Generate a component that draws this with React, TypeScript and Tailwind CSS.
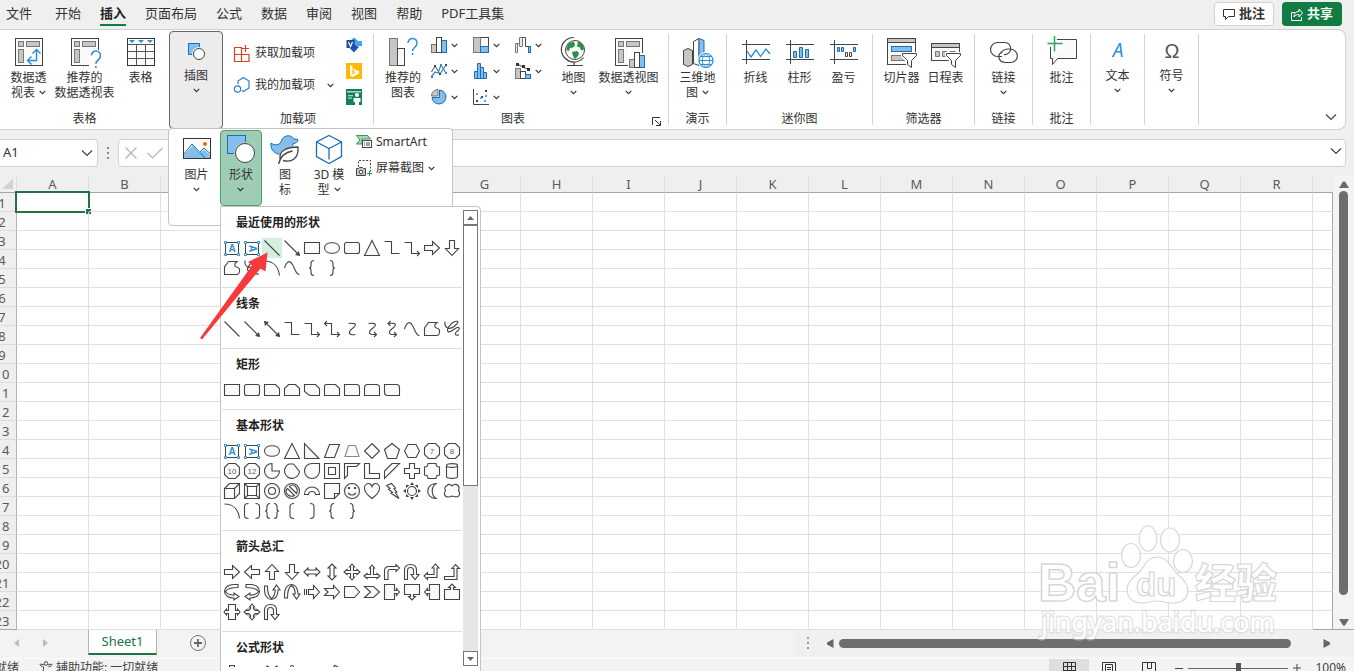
import React from "react";

/* ---------- small shared pieces ---------- */

function Chevron({ className = "" }: { className?: string }) {
  return (
    <svg width="7" height="7" viewBox="0 0 8 8" className={`inline-block shrink-0 ${className}`} aria-hidden="true">
      <path d="M0.8 2.2 4 5.4 7.2 2.2" fill="none" stroke="#333" strokeWidth="1.3" />
    </svg>
  );
}

function WideChevron() {
  return (
    <svg width="12" height="8" viewBox="0 0 12 8" className="block" aria-hidden="true">
      <path d="M1 1.5 6 6.5 11 1.5" fill="none" stroke="#444" strokeWidth="1.2" />
    </svg>
  );
}

function Icon({ children, size = 32, box = 32 }: { children: React.ReactNode; size?: number; box?: number }) {
  return (
    <svg width={size} height={size} viewBox={`0 0 ${box} ${box}`} fill="none" stroke="#444" className="shrink-0" aria-hidden="true">
      {children}
    </svg>
  );
}

const BLUE = "#83beec";
const BLUE_LINE = "#1a6fb8";
const GREY = "#c8c6c4";

/* ---------- ribbon icons ---------- */

const PivotFrame = () => (
  <g>
    <rect x="2.5" y="2.5" width="27" height="27" fill="#fafafa" stroke="#444" />
    <rect x="5.5" y="5.5" width="5" height="5" fill={GREY} stroke="#797774" />
    <rect x="13.5" y="5.5" width="13" height="5" fill={GREY} stroke="#797774" />
    <rect x="5.5" y="13.5" width="5" height="13" fill={GREY} stroke="#797774" />
  </g>
);

const PivotIcon = () => (
  <Icon>
    <PivotFrame />
    <path d="M15 24.5h8.5v-10M18.5 20.5l-4 4 4 4M19.5 17.5l4-4 4 4" stroke="#2b8fd6" strokeWidth="1.4" />
  </Icon>
);
const RecommendedPivotIcon = () => (
  <Icon>
    <PivotFrame />
    <path d="M20 14h12v18H20z" fill="#fff" stroke="none" />
    <path d="M22.5 19.5c0-6 9-6 9 .3 0 4-4.6 4-4.6 8M26.900 30v2" stroke="#2b8fd6" strokeWidth="1.6" />
  </Icon>
);
const TableIcon = () => (
  <Icon>
    <rect x="2.5" y="2.5" width="27" height="27" fill="#fafafa" stroke="#333" />
    <path d="M2.5 8.5h27M2.5 15.5h27M2.5 22.5h27M11.5 8.5v21M20.5 8.5v21" stroke="#555" />
    <path d="M4 4h6l-3 3zM13 4h6l-3 3zM22 4h6l-3 3z" fill="#2b8fd6" stroke="none" />
  </Icon>
);
const IllustrationIcon = () => (
  <Icon size={24} box={24}>
    <rect x="4.5" y="3.5" width="11" height="11" fill={BLUE} stroke={BLUE_LINE} />
    <circle cx="15" cy="14" r="7" fill="#ececec" stroke="none" />
    <circle cx="15" cy="14" r="5.5" fill="#fff" />
  </Icon>
);
const GetAddinIcon = () => (
  <Icon size={18} box={18}>
    <path d="M1.5 3.5h7v14h-7zM1.5 10.5h14.5v7h-14.5M8.5 10.5v7M12.5 1v7M9 4.5h7" stroke="#d8431f" strokeWidth="1.2" />
  </Icon>
);
const MyAddinIcon = () => (
  <Icon size={18} box={18}>
    <path d="M5 8V5l5.5-3.5L16 5v7l-5.500 3.500L9 14.500" stroke="#2b7fc4" strokeWidth="1.2" />
    <circle cx="4.5" cy="13" r="3.2" stroke="#2b7fc4" strokeWidth="1.2" />
  </Icon>
);
const VisioIcon = () => (
  <Icon size={16} box={16}>
    <path d="M8 0.5 12 4 8 7.5 4 4z" fill="#3f9ad8" stroke="none" />
    <path d="M12 4h4v5h-4l-4-1.5z" fill="#41a5ee" stroke="none" />
    <path d="M8 7l5 3-5 5.5-4-4z" fill="#185abd" stroke="none" />
    <rect x="0.5" y="3" width="8" height="8" fill="#1e4da0" stroke="none" />
    <path d="M2.5 5l2 4.5 2-4.5" stroke="#fff" strokeWidth="1.2" />
  </Icon>
);
const BingIcon = () => (
  <Icon size={16} box={16}>
    <rect width="16" height="16" fill="#ffb900" stroke="none" />
    <path d="M4 2l2.5 1v7.5l-2.5 2zM7 5.5l6 2.5v2.5L6.5 14 4 12.5l5-2.5z" fill="#fff" stroke="none" />
  </Icon>
);
const PeopleIcon = () => (
  <Icon size={16} box={16}>
    <rect width="16" height="16" fill="#13805a" stroke="none" />
    <path d="M1 2h14v1.5H1zM2 6h5v1.2H2zM2 8.5h4v1.2H2z" fill="#a8d8c4" stroke="none" />
    <circle cx="11" cy="6" r="2" fill="#fff" stroke="none" />
    <path d="M7.5 9h7v4h-1.5v3H9v-3H7.5z" fill="#fff" stroke="none" />
  </Icon>
);
const RecommendedChartIcon = () => (
  <Icon>
    <rect x="2.5" y="2.5" width="8" height="27" fill={GREY} stroke="#797774" />
    <rect x="10.5" y="12.5" width="7" height="17" fill="#fafafa" />
    <path d="M21 7c0-6 9-6 9 .3 0 4-4.5 4-4.5 8M25.5 17v2" stroke="#2b8fd6" strokeWidth="1.5" />
  </Icon>
);
const ColumnChart = () => (
  <Icon size={16} box={16}>
    <rect x="0.5" y="7.5" width="5" height="8" fill={GREY} stroke="#797774" />
    <rect x="10.5" y="3.5" width="5" height="12" fill={BLUE} stroke={BLUE_LINE} />
    <rect x="5.5" y="0.5" width="5" height="15" fill="#fff" />
  </Icon>
);
const TreemapChart = () => (
  <Icon size={16} box={16}>
    <rect x="0.5" y="0.5" width="15" height="15" fill="#fafafa" />
    <rect x="0.5" y="0.5" width="7" height="15" fill={GREY} stroke="#797774" />
    <rect x="7.5" y="9.5" width="8" height="6" fill={BLUE} stroke={BLUE_LINE} />
  </Icon>
);
const WaterfallChart = () => (
  <Icon size={16} box={16}>
    <path d="M0.5 15.5v-9h4V0.5h3v9h-3v-3h-2v9z" fill="#e8e8e8" stroke="#797774" />
    <path d="M7.5 0.5h3v9h2.5" />
    <rect x="13.5" y="9.5" width="2" height="6" fill={BLUE} stroke={BLUE_LINE} />
  </Icon>
);
const LineChart = () => (
  <Icon size={16} box={16}>
    <path d="M0.5 9 4 3l5 8 6-9" />
    <path d="M0.5 13.5 4 9l3 1 3-8 5 8" stroke="#2b8fd6" strokeWidth="1.3" />
    <path d="M3 2h2v2H3zM8 10h2v2H8zM14 1h2v2h-2z" fill="#444" stroke="none" />
    <path d="M0 13h2v2H0zM9 1h2v2H9zM14 9h2v2h-2z" fill="#2b8fd6" stroke="none" />
  </Icon>
);
const HistogramChart = () => (
  <Icon size={16} box={16}>
    <path d="M1.5 15.5v-7h3v7zM4.5 15.5V0.5h3v15zM7.5 15.5v-11h3v11zM10.5 15.5v-6h3v6z" fill={BLUE} stroke={BLUE_LINE} />
  </Icon>
);
const ComboChart = () => (
  <Icon size={16} box={16}>
    <rect x="0.5" y="5.5" width="5" height="10" fill={GREY} stroke="#797774" />
    <rect x="5.5" y="8.5" width="5" height="7" fill="#fff" />
    <rect x="10.5" y="11.5" width="5" height="4" fill={BLUE} stroke={BLUE_LINE} />
    <path d="M2 1l12 6" />
    <path d="M1 0h3v3H1zM7 2h3v3H7zM12 5h3v3h-3z" fill="#333" stroke="none" />
  </Icon>
);
const PieChart = () => (
  <Icon size={16} box={16}>
    <path d="M8.5 1a7 7 0 1 1-7.5 7.5h7.5z" fill={BLUE} stroke={BLUE_LINE} />
    <path d="M7 0.5A6.5 6.5 0 0 0 0.5 7H7z" fill={GREY} stroke="#797774" />
  </Icon>
);
const ScatterChart = () => (
  <Icon size={16} box={16}>
    <path d="M0.5 0v15.5H16" />
    <path d="M3 11h2v2H3zM12 1h2v2h-2zM8 7h2v2H8z" fill="#444" stroke="none" />
    <path d="M3 4h2v2H3zM7 8h2v2H7zM12 6h2v2h-2zM11 11h2v2h-2z" fill="#5aaae6" stroke="none" />
  </Icon>
);
const MapIcon = () => (
  <Icon>
    <circle cx="17" cy="14" r="9.5" fill="#fafafa" />
    <path d="M20 5.5c4 1 6 4 6 8l-3 1-1-3-3-1zM11 7l5-1.500 1 4-2 2-3 .5-1 3-2.500-1c0-3 1-5 2.500-7zM14 16l5-1 2 2-1 3-3 3-2-3z" fill="#2c8f4a" stroke="none" />
    <path d="M16 1.5A12 12 0 0 0 8 23a12 12 0 0 0 17.5-1.5M16 26v3M9 29.5h16" strokeWidth="1.2" />
  </Icon>
);
const PivotChartIcon = () => (
  <Icon>
    <PivotFrame />
    <path d="M15 12h17v20H15z" fill="#fff" stroke="none" />
    <path d="M29.5 12v5" />
    <rect x="16.5" y="23.5" width="5" height="8" fill={GREY} stroke="#797774" />
    <rect x="26.5" y="19.5" width="5" height="12" fill={BLUE} stroke={BLUE_LINE} />
    <rect x="21.5" y="16.5" width="5" height="15" fill="#fff" />
  </Icon>
);
const Map3DIcon = () => (
  <Icon>
    <path d="M1.5 14.5 6 12.5l4.5 2v14L6 30.5l-4.500-2z" fill={GREY} />
    <path d="M11.5 5.5 17 2.5v27l-5.500-2z" fill="#fff" />
    <path d="M17 2.5l5 2v24l-5 1z" fill={BLUE} stroke={BLUE_LINE} />
    <circle cx="24" cy="24.5" r="8.5" fill="#fff" stroke="none" />
    <circle cx="24" cy="24.5" r="7" fill="#fff" stroke="#2b8fd6" strokeWidth="1.2" />
    <path d="M17 24.5h14M18.5 20.5h11M18.5 28.5h11M24 17.5c-5 4-5 10 0 14M24 17.5c5 4 5 10 0 14" stroke="#2b8fd6" />
  </Icon>
);
const SparkAxes = () => <path d="M6.5 4v24M2 8.5h28M2 23.5h28" stroke="#444" />;
const SparkLineIcon = () => (
  <Icon>
    <SparkAxes />
    <path d="M7 15l4 6 5-7 4.5 6.5L26 13l4 5" stroke="#2b8fd6" strokeWidth="1.3" />
  </Icon>
);
const SparkColumnIcon = () => (
  <Icon>
    <SparkAxes />
    <path d="M9.5 21.5v-6h3v6zM15.5 21.5v-10h3v10zM21.5 21.5v-8h3v8z" fill={BLUE} stroke={BLUE_LINE} />
  </Icon>
);
const SparkWinIcon = () => (
  <Icon>
    <SparkAxes />
    <path d="M9.5 11.5h2v4h-2zM13.5 11.5h2v4h-2zM25.5 11.5h2v4h-2z" fill={BLUE} stroke={BLUE_LINE} />
    <path d="M17.5 16.5h2v4h-2zM21.5 16.5h2v4h-2z" />
  </Icon>
);
const Funnel = () => (
  <g>
    <path d="M15 16h17v16H20v-6l-5-6z" fill="#fff" stroke="none" />
    <path d="M16.5 17.5h14v2l-5 5v7l-4-3v-4l-5-5z" fill="#fff" stroke="#444" />
  </g>
);
const SlicerIcon = () => (
  <Icon>
    <rect x="1.5" y="2.5" width="28" height="26" fill="#fafafa" />
    <rect x="1.5" y="2.5" width="28" height="4" fill={GREY} />
    <rect x="5.5" y="10.5" width="20" height="5" fill={BLUE} stroke={BLUE_LINE} />
    <rect x="5.5" y="19.5" width="13" height="5" fill={GREY} stroke="#797774" />
    <Funnel />
  </Icon>
);
const TimelineIcon = () => (
  <Icon>
    <rect x="1.5" y="7.5" width="28" height="17" fill="#fafafa" />
    <rect x="1.5" y="7.5" width="28" height="4" fill={GREY} />
    <path d="M5.5 15.5h4v5h-4zM12.5 15.5h4v5h-4zM19.5 15.5h6" fill={GREY} stroke="#797774" />
    <Funnel />
  </Icon>
);
const LinkIcon = () => (
  <Icon>
    <path d="M14 20.5H9.5a6.500 6.500 0 0 1 0-14H17a6 6 0 0 1 2 11.500q-1.500.800-3 .500" strokeWidth="1.2" />
    <path d="M13 17.500c1-3 4-4.500 8-4.500 11 0 11 13.500 1 13.500h-4.500C11 26.500 8.500 19.500 13.500 16" strokeWidth="1.2" />
  </Icon>
);
const CommentAddIcon = () => (
  <Icon>
    <path d="M4.5 3.5h26v19H11.5l-5 6v-6h-2z" fill="#fafafa" />
    <path d="M0 0h15v15H0z" fill="#fff" stroke="none" />
    <path d="M15 3.5H11M4.5 11v11.5" />
    <path d="M8.5 0v15.5M1.5 7.5h15" stroke="#2fa35a" strokeWidth="1.5" />
  </Icon>
);
const TextIcon = () => (
  <Icon size={24} box={24}>
    <text x="12" y="17" textAnchor="middle" fontSize="19" fontStyle="italic" fontFamily="Noto Sans" fill="#2b8fd6" stroke="none">A</text>
  </Icon>
);
const SymbolIcon = () => (
  <Icon size={24} box={24}>
    <text x="12" y="18" textAnchor="middle" fontSize="20" fontFamily="Liberation Sans" fill="#555" stroke="none">Ω</text>
  </Icon>
);
const PictureIcon = () => (
  <Icon>
    <rect x="2.5" y="5.5" width="27" height="20" fill="#fafafa" />
    <path d="M3 22l9-10 7 8 4-3.5 6.5 6V25H3z" fill={BLUE} stroke="none" />
    <path d="M3 21l8-10 13 14M19 19l4-4 6.5 6" stroke={BLUE_LINE} />
    <path d="M2.5 5.5h27v20h-27z" stroke="#333" />
    <circle cx="24" cy="11" r="2" fill="#e06c14" stroke="none" />
  </Icon>
);
const ShapesIcon = () => (
  <Icon>
    <rect x="2.5" y="2.5" width="18" height="18" fill={BLUE} stroke={BLUE_LINE} />
    <circle cx="20" cy="20" r="11" fill="#9fccb4" stroke="none" />
    <circle cx="20" cy="20" r="9.5" fill="#fff" />
  </Icon>
);
const DuckIcon = () => (
  <Icon>
    <path d="M2 10c4 3 8 2 10-1 1-6 9-9 13-3l4 .5c0 3-3 4-5 4 0 6-5 11-11 11C6 21.5 1 17 2 10z" fill={BLUE} stroke={BLUE_LINE} />
    <path d="M9 31c-1-10 4-18 22-18 1 14-8 19-18 15z" fill="#fff" stroke="none" />
    <path d="M9.5 31c2-8 8-12 14-13M11 26c-1-8 6-12 18-12 1 11-6 16-15 13.5" strokeWidth="1.3" />
  </Icon>
);
const CubeIcon = () => (
  <Icon>
    <path d="M16 2.5 28.5 9v14.5L16 30.5 3.5 23.5V9z" fill="#fff" stroke={BLUE_LINE} strokeWidth="1.3" />
    <path d="M3.5 9 16 15.5 28.5 9M16 15.5v11" stroke={BLUE_LINE} strokeWidth="1.3" />
  </Icon>
);
const SmartArtIcon = () => (
  <Icon size={16} box={16}>
    <path d="M0.5 1.5h11l3 3.5H6v5H0.5l3.5-4z" fill="#a4d8b4" stroke="#2f9d55" />
    <rect x="6.5" y="6.5" width="9" height="7" fill="#fff" />
    <path d="M8 9h1M10 9h4M8 11h1M10 11h4" />
  </Icon>
);
const ScreenshotIcon = () => (
  <Icon size={16} box={16}>
    <path d="M2.5 7V0.5h12v11" strokeDasharray="2 1.5" />
    <path d="M0.5 8.5h2l1-1h3l1 1h2v7h-9z" fill={GREY} />
    <circle cx="5" cy="12" r="1.8" fill="#fff" />
    <path d="M13.5 11v5M11 13.5h5" stroke="#2f9d55" />
  </Icon>
);

/* ---------- shape gallery ---------- */

type Shape = { d?: string; open?: boolean; t?: string; head?: string; label?: string; text?: "h" | "v"; grey?: boolean };

const OCT = "M6.5 2.5h7l4 4v7l-4 4h-7l-4-4v-7z";
const RIGHT = "M2.5 7.5h8v-4l7 6.5-7 6.5v-4h-8z";
const UTURN = "M2.5 17.5V8q0-5.5 6-5.5t6 5.5v4.5h2.500L13 17.500l-4-5h2.500V8.500q0-3-3-3t-3 3v9z";
const HOOK = "M16 2.500h-4C6 2.500 2.500 5.500 2.500 9.500s4 6.500 9.500 6.500v2l5-3.500-5-3.500v2.200c-4-.2-7-1.200-8.500-3.700C5 7 9.500 5.500 16 5.500z";

const S: Record<string, Shape> = {
  textH: { text: "h" },
  textV: { text: "v" },
  line: { d: "M2.5 2.5l15 15", open: true },
  arrow: { d: "M2.5 2.5l15 15", open: true, head: "M18 18l-5-1 4-4z" },
  arrow2: { d: "M2.5 2.5l15 15", open: true, head: "M18 18l-5-1 4-4zM2 2l5 1-4 4z" },
  elbow: { d: "M2.5 3.5h7v12h8", open: true },
  elbowArrow: { d: "M2.5 4.5h7v11h7M15 13l2.5 2.500-2.500 2.500", open: true },
  elbowArrow2: { d: "M3 4.5h6.500v11h7M15 13l2.500 2.500-2.500 2.500M5 2l-2.500 2.500L5 7", open: true },
  curve: { d: "M6.5 4.500c5-.5 8 0 6.500 2.500s-5 3-5.500 6 3 3 6 2.500", open: true },
  curveArrow: { d: "M6.5 4.500c5-.5 8 0 6.500 2.500s-5 3-5.500 6 3 2.500 6 2.500M12 13l2.500 2.500-2.500 2.500", open: true },
  curveArrow2: { d: "M6.5 4.500c5-.5 8 0 6.500 2.500s-5 3-5.500 6 3 2.500 6 2.500M12 13l2.500 2.500-2.500 2.500M8.500 2l-2.500 2.500 2.500 2.500", open: true },
  freeCurve: { d: "M2.5 10C5 2.5 8 2 10.5 6.5S14 16.5 17.5 16.5", open: true },
  freeform: { d: "M2.5 16.5V9l4-5.5h8.5c-3 2-3 5-.5 5.5s3.5 2 3 4.5-1 3-2.5 3z" },
  scribble: { d: "M3 2.5c-1 6 4 9 9 5s5-6 1-5-9 8-7 10 6-3 9-4 3 2 0 4-2 4 2 3.500", open: true },
  rect: { d: "M2.5 4.5h15v11h-15z" },
  ellipse: { d: "M2.5 10c0-7 15-7 15 0s-15 7-15 0z" },
  round: { d: "M4.5 4.5h11q2 0 2 2v7q0 2-2 2h-11q-2 0-2-2v-7q0-2 2-2z" },
  snip1: { d: "M2.5 4.5h11l4 4v7h-15z" },
  snip2: { d: "M6.5 4.5h7l4 4v7h-15v-7z" },
  snipD: { d: "M2.5 4.5h11l4 4v7h-10l-5-4z" },
  snipR: { d: "M4.5 4.5h9l4 4v7h-15v-9q0-2 2-2z" },
  round1: { d: "M2.5 4.5h12q3 0 3 3v8h-15z" },
  round2: { d: "M5.5 4.5h9q3 0 3 3v8h-15v-8q0-3 3-3z" },
  roundD: { d: "M2.5 4.500h12q3 0 3 3v8h-12q-3 0-3-3z" },
  tri: { d: "M10 2.5l7.500 15h-15z" },
  rtri: { d: "M2.5 2.5v15h14.5z" },
  para: { d: "M7.5 3.5h10l-5 13h-10z" },
  trap: { d: "M6.5 4.5h7l3.500 11h-14z", grey: true },
  diamond: { d: "M10 2.5l7.500 7.500-7.500 7.500L2.5 10z" },
  pent: { d: "M10 2.5l7.500 6-3 9h-9l-3-9z" },
  hex: { d: "M6 3.5h8l3.500 6.500-3.500 6.500H6L2.5 10z" },
  n7: { d: OCT, label: "7" },
  n8: { d: OCT, label: "8" },
  n10: { d: OCT, label: "10" },
  n12: { d: OCT, label: "12" },
  pie: { d: "M10 2.5a7.500 7.500 0 1 0 7.500 7.500H10z" },
  chord: { d: "M7 3a7.500 7.500 0 1 0 10.500 7.500L11.500 3z" },
  tear: { d: "M17.5 2.5V10a7.500 7.500 0 1 1-7.500-7.500z" },
  frame: { d: "M2.5 2.5h15v15h-15zM6.5 6.5v7h7v-7z" },
  halfFrame: { d: "M2.5 2.5h15l-3 3h-9v9l-3 3z" },
  lShape: { d: "M2.5 2.5h5v10h10v5h-15z" },
  stripe: { d: "M10 2.5h7.500l-15 15V10z" },
  cross: { d: "M7.5 2.5h5v5h5v5h-5v5h-5v-5h-5v-5h5z" },
  plaque: { d: "M6 2.5h8q0 3.500 3.500 3.500v8q-3.500 0-3.500 3.500H6q0-3.500-3.500-3.500V6Q6 6 6 2.5z" },
  can: { d: "M4.5 4.5c0-2.500 11-2.500 11 0v11c0 2.500-11 2.500-11 0zc0 2.500 11 2.500 11 0" },
  cube: { d: "M2.5 7.5l5-5h10v10l-5 5h-10zM2.5 7.5h10v10M12.5 7.5l5-5" },
  bevel: { d: "M2.5 2.5h15v15h-15zM5.5 5.5h9v9h-9zM2.5 2.5l3 3M17.5 2.5l-3 3M2.5 17.5l3-3M17.5 17.5l-3-3" },
  donut: { d: "M2.5 10a7.500 7.500 0 1 0 15 0 7.500 7.500 0 1 0-15 0zM6.5 10a3.500 3.500 0 1 0 7 0 3.500 3.500 0 1 0-7 0z" },
  no: { d: "M2.5 10a7.500 7.500 0 1 0 15 0 7.500 7.500 0 1 0-15 0zM5.5 7.5l7 7q-4 2-7-1t0-6zM7.5 5.5l7 7q2-4-1-7t-6 0z" },
  arc: { d: "M2.5 13.5c0-10 15-10 15 0h-4c0-4-7-4-7 0z" },
  fold: { d: "M2.5 2.5h15v10l-5 5h-10zM12.5 17.5v-5h5" },
  smile: { d: "M2.5 10a7.500 7.500 0 1 0 15 0 7.500 7.500 0 1 0-15 0zM6.5 6.5h1v1h-1zM12.5 6.5h1v1h-1zM6 12q4 4 8 0" },
  heart: { d: "M10 17.5C-2 9 3 2.5 6.5 2.5 9 2.5 10 5.5 10 5.5S11 2.5 13.5 2.5C17 2.5 22 9 10 17.5z" },
  bolt: { d: "M4.500 4.500l5-2 4 4.500-1.500.800 3 3.200-1.500.800 3.500 5.700-8-5.200 1.500-.800-4-3.200 1.500-.800z" },
  sun: { d: "M5.5 10a4.500 4.500 0 1 0 9 0 4.500 4.500 0 1 0-9 0zM9 3.5l1-1.500 1 1.500zM9 16.5l1 1.500 1-1.500zM3.5 9L2 10l1.500 1zM16.5 9l1.500 1-1.500 1zM4.5 4.5h1.500L4.5 6zM15.5 4.5H14L15.5 6zM4.5 15.5h1.500L4.5 14zM15.5 15.5H14l1.500-1.500z" },
  moon: { d: "M14 2.5c-11 0-11 15 0 15-5-3.500-5-11.500 0-15z" },
  cloud: { d: "M5 4.500c2-2 4-1 5 .5 1-1.500 4-2.500 6-.5s1 4 .5 5c1.500 1.500 1.500 5-.5 6s-4 0-6-.5c-2 1-4 1.500-6 .5s-2-4-.5-6C2.500 8 2.500 5.500 5 4.500z" },
  bigArc: { d: "M2.5 3c9 0 14 6 15 14.5", open: true },
  brackets: { d: "M6.5 2.5q-4 0-4 3v9q0 3 4 3M13.500 2.500q4 0 4 3v9q0 3-4 3", open: true },
  braces: { d: "M8 2.5q-3 0-3 3v2.500q0 2-2 2 2 0 2 2v2.500q0 3 3 3M12 2.500q3 0 3 3v2.500q0 2 2 2-2 0-2 2v2.500q0 3-3 3", open: true },
  bracketL: { d: "M12 2.5q-4 0-4 3v9q0 3 4 3", open: true },
  bracketR: { d: "M8 2.5q4 0 4 3v9q0 3-4 3", open: true },
  braceL: { d: "M12 2.5q-3 0-3 3v2.500q0 2-2 2 2 0 2 2v2.500q0 3 3 3", open: true },
  braceR: { d: "M8 2.5q3 0 3 3v2.500q0 2 2 2-2 0-2 2v2.500q0 3-3 3", open: true },
  aR: { d: RIGHT },
  aL: { d: RIGHT, t: "rotate(180 10 10)" },
  aU: { d: RIGHT, t: "rotate(-90 10 10)" },
  aD: { d: RIGHT, t: "rotate(90 10 10)" },
  aLR: { d: "M2 10l4-4v2h8V6l4 4-4 4v-2H6v2z" },
  aUD: { d: "M2 10l4-4v2h8V6l4 4-4 4v-2H6v2z", t: "rotate(90 10 10)" },
  quad: { d: "M10 2l2.500 3h-1v3.500H15v-1l3 2.500-3 2.500v-1h-3.500V15h1L10 18l-2.500-3h1v-3.500H5v1L2 10l3-2.500v1h3.500V5h-1z" },
  triA: { d: "M10 3l2.500 3h-1v6.500H15v-1l3 2.500-3 2.500v-1H5v1L2 14l3-2.500v1h3.500V6h-1z" },
  bent: { d: "M2.5 17.5V9q0-4.500 4.500-4.500h7V2.5L17.5 6 14 9.5v-2H8q-2 0-2 2v8z" },
  uturn: { d: UTURN },
  leftUp: { d: "M2 14l3.500-3.500v2H12v-6.500h-2L13.500 2 17 6h-2v9.500H5.500v2z" },
  bentUp: { d: "M2.5 14.5H12v-8h-2l3.500-4 4 4H15v11H2.5z" },
  curvR: { d: HOOK },
  curvL: { d: HOOK, t: "matrix(-1 0 0 1 20 0)" },
  curvU: { d: HOOK, t: "rotate(-90 10 10)" },
  curvD: { d: HOOK, t: "matrix(1 0 0 -1 0 20) rotate(-90 10 10)" },
  striped: { d: "M2.5 7v6M4.5 7v6M6.5 7.5h5v-4l6 6.500-6 6.500v-4h-5z" },
  notched: { d: "M2.5 6.5h9v-3l6 6.500-6 6.500v-3h-9L6 10z" },
  tag: { d: "M2.5 4.5h10l5 5.500-5 5.500h-10z" },
  chev: { d: "M2.5 4.5h9l6 5.500-6 5.500h-9L8.5 10z" },
  coR: { d: "M2.5 2.5h10v6h2V6.5l3 3.500-3 3.500v-2h-2v6h-10z" },
  coD: { d: "M2.5 2.5h15v10h-6v2h2L10 18l-3.500-3.500h2v-2h-6z" },
  coL: { d: "M17.5 2.5h-10v6h-2V6.5l-3 3.500 3 3.500v-2h2v6h10z" },
  coU: { d: "M2.5 17.5h15v-10h-6v-2h2L10 2 6.5 5.5h2v2h-6z" },
  coLR: { d: "M6.5 2.5h7v6h2V7l2.500 3-2.500 3v-1.500h-2v6h-7v-6h-2V13L2 10l2.500-3v1.500h2z" },
  coQ: { d: "M10 2l2.500 3h-1v2h1.500v1.500h2v-1l3 2.500-3 2.500v-1h-2V13h-1.500v2h1L10 18l-2.500-3h1v-2H7v-1.500H5v1L2 10l3-2.500v1h2V7h1.500V5h-1z" },
  plus: { d: "M7.5 2.5h5v5h5v5h-5v5h-5v-5h-5v-5h5z" },
  minus: { d: "M2.5 8h15v4h-15z" },
  times: { d: "M5.5 3l4.500 4 4.500-4L17 5.5 13 10l4 4.500L14.5 17 10 13l-4.500 4L3 14.5 7 10 3 5.5z" },
  divide: { d: "M8.5 4a1.500 1.500 0 1 0 3 0 1.500 1.500 0 1 0-3 0zM2.5 8.5h15v3h-15z" },
  equal: { d: "M2.5 6h15v3h-15zM2.5 12h15v3h-15z" },
  notEq: { d: "M2.5 6h8l2-3.500 3 1-1 2.500h3v3h-15z" },
};

const SECTIONS: { title: string; rows: string[] }[] = [
  {
    title: "最近使用的形状",
    rows: [
      "textH textV line arrow rect ellipse round tri elbow elbowArrow aR aD",
      "freeform scribble bigArc freeCurve braceL braceR",
    ],
  },
  { title: "线条", rows: ["line arrow arrow2 elbow elbowArrow elbowArrow2 curve curveArrow curveArrow2 freeCurve freeform scribble"] },
  { title: "矩形", rows: ["rect round snip1 snip2 snipD snipR round1 round2 roundD"] },
  {
    title: "基本形状",
    rows: [
      "textH textV ellipse tri rtri para trap diamond pent hex n7 n8",
      "n10 n12 pie chord tear frame halfFrame lShape stripe cross plaque can",
      "cube bevel donut no arc fold smile heart bolt sun moon cloud",
      "bigArc brackets braces bracketL bracketR braceL braceR",
    ],
  },
  {
    title: "箭头总汇",
    rows: [
      "aR aL aU aD aLR aUD quad triA bent uturn leftUp bentUp",
      "curvR curvL curvU curvD striped notched tag chev coR coD coL coU",
      "coLR coQ uturn",
    ],
  },
  { title: "公式形状", rows: ["plus minus times divide equal notEq"] },
];

function ShapeGlyph({ name }: { name: string }) {
  const s = S[name];
  if (s.text) {
    return (
      <svg width="20" height="20" viewBox="0 0 20 20" fill="none" aria-hidden="true">
        <path d="M3.5 4.5h13v12h-13z" stroke="#444" />
        <path d="M2.5 3.5h2v2h-2zM15.5 3.5h2v2h-2zM2.5 15.5h2v2h-2zM15.5 15.5h2v2h-2z" fill="#fff" stroke="#2b8fd6" />
        <text
          x="10"
          y="14"
          textAnchor="middle"
          fontSize="10"
          fontWeight="700"
          fontFamily="Liberation Sans"
          fill="#2b8fd6"
          transform={s.text === "v" ? "rotate(90 10 10.5)" : undefined}
        >
          A
        </text>
      </svg>
    );
  }
  return (
    <svg width="20" height="20" viewBox="0 0 20 20" aria-hidden="true">
      <path d={s.d} transform={s.t} fill={s.open ? "none" : "#fafafa"} fillRule="evenodd" stroke={s.grey ? "#8a8a8a" : "#444"} strokeWidth="1.1" />
      {s.head && <path d={s.head} fill="#444" />}
      {s.label && (
        <text x="10" y="13" textAnchor="middle" fontSize="8" fontFamily="Liberation Sans" fill="#666">
          {s.label}
        </text>
      )}
    </svg>
  );
}

function ShapeGallery() {
  return (
    <div className="absolute top-[77px] left-[51px] z-20 flex h-[480px] w-[261px] rounded-tr border border-[#c4c4c4] bg-white">
      <div className="h-[460px] w-[242px] overflow-hidden px-px">
        {SECTIONS.map((sec) => (
          <section key={sec.title} className="border-b border-[#dcdcdc] pb-[9px]">
            <h3 className="h-[31px] pl-3.5 text-xs leading-[32px] font-bold text-[#222]">{sec.title}</h3>
            {sec.rows.map((row, r) => (
              <div key={r} className="flex">
                {row.split(" ").map((n, i) => (
                  <button
                    key={i}
                    aria-label={n}
                    className={`size-5 ${sec.title === "最近使用的形状" && n === "line" ? "bg-[#d3efdf]" : ""}`}
                  >
                    <ShapeGlyph name={n} />
                  </button>
                ))}
              </div>
            ))}
          </section>
        ))}
      </div>
      <div className="mt-[3px] flex h-[456px] w-[15px] flex-col bg-[#e6e6e6]">
        <button aria-label="向上滚动" className="flex h-[15px] items-center justify-center border border-[#777] bg-white">
          <svg width="7" height="4" viewBox="0 0 7 4" aria-hidden="true"><path d="M0 4 3.5 0 7 4z" fill="#666" /></svg>
        </button>
        <div className="h-[261px] border border-[#777] bg-white" />
        <button aria-label="向下滚动" className="mt-auto flex h-[15px] items-center justify-center border border-[#777] bg-white">
          <svg width="7" height="4" viewBox="0 0 7 4" aria-hidden="true"><path d="M0 0h7L3.5 4z" fill="#666" /></svg>
        </button>
      </div>
    </div>
  );
}

/* ---------- ribbon ---------- */

function BigButton({
  icon,
  lines,
  drop,
  className = "w-14",
}: {
  icon: React.ReactNode;
  lines: string[];
  drop?: "inline" | "below";
  className?: string;
}) {
  return (
    <button className={`flex shrink-0 flex-col items-center text-xs leading-[15px] whitespace-nowrap ${className}`}>
      {icon}
      <span className="mt-0.5 flex flex-col items-center">
        {lines.map((l, i) => (
          <span key={l} className="flex items-center gap-1">
            {l}
            {drop === "inline" && i === lines.length - 1 && <Chevron />}
          </span>
        ))}
        {drop === "below" && (
          <span className="flex h-[15px] items-center">
            <Chevron />
          </span>
        )}
      </span>
    </button>
  );
}

function Group({
  title,
  width,
  line = true,
  children,
  launcher,
}: {
  title?: string;
  width: string;
  line?: boolean;
  children: React.ReactNode;
  launcher?: boolean;
}) {
  return (
    <div className={`my-1 flex shrink-0 flex-col ${width} ${line ? "border-r border-[#d4d4d4]" : ""}`}>
      <div className="flex flex-1 justify-center pt-0.5">{children}</div>
      {title && (
        <div className="flex h-3 items-center">
          <div className="flex-1 text-center text-xs leading-3">{title}</div>
          {launcher && (
            <button aria-label="更多图表" className="mt-1 w-4">
              <svg width="9" height="9" viewBox="0 0 9 9" fill="none" stroke="#333" className="block" aria-hidden="true">
                <path d="M0.5 8V0.5H8M3 3l5 5M8.5 4v4.500H4" />
              </svg>
            </button>
          )}
        </div>
      )}
    </div>
  );
}

function CompactButton({ icon, label, className = "pt-1" }: { icon: React.ReactNode; label: string; className?: string }) {
  return (
    <button className={`flex w-full flex-col items-center text-xs leading-[15px] ${className}`}>
      {icon}
      <span className="mt-1">{label}</span>
      <span className="flex h-[15px] items-center">
        <Chevron />
      </span>
    </button>
  );
}

const CHARTS: { name: string; icon: React.ReactNode }[] = [
  { name: "柱形图", icon: <ColumnChart /> },
  { name: "层次结构图", icon: <TreemapChart /> },
  { name: "瀑布图", icon: <WaterfallChart /> },
  { name: "折线图", icon: <LineChart /> },
  { name: "统计图", icon: <HistogramChart /> },
  { name: "组合图", icon: <ComboChart /> },
  { name: "饼图", icon: <PieChart /> },
  { name: "散点图", icon: <ScatterChart /> },
];

function IllustrationsMenu() {
  return (
    <div className="absolute top-[96px] -left-[2px] z-10 flex h-[98px] w-[285px] rounded border border-[#c4c4c4] bg-white pt-px pl-[3px]">
      <BigButton icon={<PictureIcon />} lines={["图片"]} drop="below" className="h-[76px] w-[49px] pt-[3px]" />
      <BigButton
        icon={<ShapesIcon />}
        lines={["形状"]}
        drop="below"
        className="-ml-px h-[76px] w-[42px] rounded border border-[#4f9d73] bg-[#9fccb4] pt-0.5"
      />
      <BigButton icon={<DuckIcon />} lines={["图", "标"]} className="h-[76px] w-[46px] pt-[3px]" />
      <BigButton icon={<CubeIcon />} lines={["3D 模", "型"]} drop="inline" className="h-[76px] w-[42px] pt-[3px]" />
      <div className="flex flex-col pl-1.5 text-xs">
        <button className="flex h-6 items-center gap-1">
          <SmartArtIcon />
          SmartArt
        </button>
        <button className="mt-0.5 flex h-6 items-center gap-1">
          <ScreenshotIcon />
          屏幕截图
          <Chevron />
        </button>
      </div>
      <ShapeGallery />
    </div>
  );
}

function Ribbon() {
  return (
    <div className="relative mr-2 flex h-[101px] rounded-r-lg border border-l-0 border-[#d1d1d1] bg-white">
      <Group title="表格" width="w-[169px]" line={false}>
        <BigButton icon={<PivotIcon />} lines={["数据透", "视表"]} drop="inline" />
        <BigButton icon={<RecommendedPivotIcon />} lines={["推荐的", "数据透视表"]} />
        <BigButton icon={<TableIcon />} lines={["表格"]} />
      </Group>
      <div className="relative mt-px h-[98px] w-[54px] shrink-0 rounded border border-[#666] bg-[#ececec]">
        <CompactButton icon={<IllustrationIcon />} label="插图" className="pt-2" />
        <IllustrationsMenu />
      </div>
      <Group title="加载项" width="w-[151px]">
        <div className="flex w-full pl-2.5">
          <div className="flex flex-col pt-px text-xs">
            <button className="flex h-8 items-center gap-1">
              <GetAddinIcon />
              获取加载项
            </button>
            <button className="flex h-8 items-center gap-1">
              <MyAddinIcon />
              我的加载项
              <Chevron className="ml-2" />
            </button>
          </div>
          <div className="ml-3 flex flex-col gap-2.5 pt-px">
            <button aria-label="Visio"><VisioIcon /></button>
            <button aria-label="Bing"><BingIcon /></button>
            <button aria-label="人员"><PeopleIcon /></button>
          </div>
        </div>
      </Group>
      <Group title="图表" width="w-[295px]" launcher>
        <BigButton icon={<RecommendedChartIcon />} lines={["推荐的", "图表"]} className="w-[55px]" />
        <div className="grid w-[126px] grid-cols-3 content-start gap-y-2.5 pt-px">
          {CHARTS.map((c) => (
            <button key={c.name} aria-label={c.name} className="flex h-4 items-center gap-1">
              {c.icon}
              <Chevron />
            </button>
          ))}
        </div>
        <BigButton icon={<MapIcon />} lines={["地图"]} drop="below" className="w-[34px]" />
        <BigButton icon={<PivotChartIcon />} lines={["数据透视图"]} drop="below" className="w-[76px]" />
      </Group>
      <Group title="演示" width="w-[58px]">
        <BigButton icon={<Map3DIcon />} lines={["三维地", "图"]} drop="inline" />
      </Group>
      <Group title="迷你图" width="w-[146px]">
        <BigButton icon={<SparkLineIcon />} lines={["折线"]} className="w-11" />
        <BigButton icon={<SparkColumnIcon />} lines={["柱形"]} className="w-11" />
        <BigButton icon={<SparkWinIcon />} lines={["盈亏"]} className="w-11" />
      </Group>
      <Group title="筛选器" width="w-[102px]">
        <BigButton icon={<SlicerIcon />} lines={["切片器"]} className="w-11" />
        <BigButton icon={<TimelineIcon />} lines={["日程表"]} className="w-11" />
      </Group>
      <Group title="链接" width="w-[58px]">
        <BigButton icon={<LinkIcon />} lines={["链接"]} drop="below" />
      </Group>
      <Group title="批注" width="w-[58px]">
        <BigButton icon={<CommentAddIcon />} lines={["批注"]} />
      </Group>
      <Group width="w-[54px]">
        <CompactButton icon={<TextIcon />} label="文本" />
      </Group>
      <Group width="w-[54px]">
        <CompactButton icon={<SymbolIcon />} label="符号" />
      </Group>
      <button aria-label="折叠功能区" className="mr-2 mb-2 ml-auto self-end">
        <WideChevron />
      </button>
    </div>
  );
}

/* ---------- sheet ---------- */

const COLS = "ABCDEFGHIJKLMNOPQR".split("");
const ROWS = Array.from({ length: 23 }, (_, i) => i + 1);

function Sheet() {
  return (
    <div className="flex">
      <table className="min-w-0 flex-1 table-fixed border-separate border-spacing-0 bg-white text-[13px] text-[#5a5a5a]">
        <colgroup>
          <col className="w-[17px]" />
          {COLS.map((c) => (
            <col key={c} className="w-[72px]" />
          ))}
          <col />
        </colgroup>
        <thead>
          <tr className="h-[17px] bg-[#efefef]">
            <th className="border-r border-b border-r-[#dcdcdc] border-b-[#a6a6a6] p-0">
              <svg width="11" height="10" viewBox="0 0 11 10" className="ml-0.5 block" aria-hidden="true">
                <path d="M11 0v10H0z" fill="#d2d2d2" />
              </svg>
            </th>
            {COLS.map((c) => (
              <th key={c} className="border-r border-b border-r-[#dcdcdc] border-b-[#a6a6a6] p-0 leading-4 font-normal">
                {c}
              </th>
            ))}
            <th className="border-b border-[#a6a6a6] p-0" />
          </tr>
        </thead>
        <tbody>
          {ROWS.map((r) => (
            <tr key={r} className="h-[19px]">
              <th className="border-r border-b border-r-[#b4b4b4] border-b-[#dcdcdc] bg-[#efefef] p-0 leading-[18px] font-normal">
                <div className="-ml-3 h-[18px] w-7 pt-px text-center">{r}</div>
              </th>
              {COLS.map((c) => (
                <td key={c} className="relative border-r border-b border-[#e0e0e0] p-0">
                  {r === 1 && c === "A" && (
                    <div className="absolute -top-0.5 -left-0.5 h-[22px] w-[75px] border-2 border-[#217346]">
                      <div className="absolute -right-[3px] -bottom-[3px] size-[6px] border-t border-l border-white bg-[#217346]" />
                    </div>
                  )}
                </td>
              ))}
              <td className="border-r border-b border-r-[#a6a6a6] border-b-[#e0e0e0] p-0" />
            </tr>
          ))}
        </tbody>
      </table>
      <div className="flex w-[21px] flex-col items-center bg-[#f3f3f3] pt-px pb-0.5">
        <button aria-label="向上" className="flex h-[14px] items-center">
          <svg width="10" height="7" viewBox="0 0 10 7" aria-hidden="true"><path d="M0 7 4 .5h2L10 7z" fill="#6b6b6b" /></svg>
        </button>
        <div className="mb-6 w-[9px] flex-1 rounded-full bg-[#6e6e6e]" />
        <button aria-label="向下" className="mb-0.5 flex h-[7px] items-center">
          <svg width="10" height="7" viewBox="0 0 10 7" aria-hidden="true"><path d="M0 0h10L6 6.5H4z" fill="#6b6b6b" /></svg>
        </button>
      </div>
    </div>
  );
}

function SheetTabs() {
  return (
    <div className="flex h-7 items-start bg-[#f3f3f3]">
      <div className="-mt-px flex h-[27px] w-[88px] items-center border-t border-[#a6a6a6]">
        <button aria-label="上一个工作表" className="ml-3.5">
          <svg width="5" height="8" viewBox="0 0 5 8" className="block" aria-hidden="true"><path d="M5 0v8L0 4z" fill="#bdbdbd" /></svg>
        </button>
        <button aria-label="下一个工作表" className="ml-6">
          <svg width="5" height="8" viewBox="0 0 5 8" className="block" aria-hidden="true"><path d="M0 0v8l5-4z" fill="#bdbdbd" /></svg>
        </button>
      </div>
      <button className="-mt-px h-[26px] w-[69px] border-x border-b-2 border-x-[#b4b4b4] border-b-[#217346] bg-white text-[13px] leading-[24px] text-[#217346]">
        Sheet1
      </button>
      <div className="-mt-px flex h-[27px] flex-1 items-center border-t border-[#a6a6a6] pl-8">
        <button aria-label="新工作表" className="block">
          <svg width="18" height="18" viewBox="0 0 18 18" fill="none" className="block" aria-hidden="true">
            <circle cx="9" cy="9" r="7.5" stroke="#777" />
            <path d="M9 5v8M5 9h8" stroke="#666" strokeWidth="1.8" />
          </svg>
        </button>
      </div>
      <div className="-mt-px flex h-[27px] w-[559px] items-center border-t border-[#a6a6a6] bg-[#f0f0f0]">
        <div className="ml-3 flex w-px flex-col gap-[3px]">
          <i className="size-0.5 bg-[#999]" />
          <i className="size-0.5 bg-[#999]" />
          <i className="size-0.5 bg-[#999]" />
        </div>
        <div className="ml-[18px] flex flex-1 items-center">
          <button aria-label="向左">
            <svg width="8" height="9" viewBox="0 0 8 9" className="block" aria-hidden="true"><path d="M7.5 0v9L1 5.5v-2z" fill="#666" /></svg>
          </button>
          <div className="ml-[5px] h-[9px] flex-1 rounded-full bg-[#6e6e6e]" />
          <button aria-label="向右" className="mr-[23px] ml-8">
            <svg width="8" height="9" viewBox="0 0 8 9" className="block" aria-hidden="true"><path d="M0.5 0v9L7 5.5v-2z" fill="#666" /></svg>
          </button>
        </div>
      </div>
    </div>
  );
}

function StatusBar() {
  return (
    <div className="flex h-[19px] items-center border-t border-[#fafafa] bg-[#f3f3f3] text-xs text-[#444]">
      <span className="-ml-[5px] whitespace-nowrap">就绪</span>
      <svg width="14" height="14" viewBox="0 0 14 14" fill="none" stroke="#444" className="ml-5" aria-hidden="true">
        <circle cx="7" cy="2.5" r="1.8" />
        <path d="M5 4 1.5 3c-1 1 0 2 3 3v2.5L3 12.5M9 4l3.5-1c1 1 0 2-3 3M8 11h.5M11 11l2 2" />
      </svg>
      <span className="ml-[3px] whitespace-nowrap">辅助功能: 一切就绪</span>
      <div className="ml-auto flex items-center">
        <button aria-label="普通" className="flex h-[18px] w-10 items-center justify-center bg-[#dedede]">
          <svg width="13" height="13" viewBox="0 0 13 13" fill="none" stroke="#333" aria-hidden="true">
            <path d="M0.5 0.5h12v12H0.5zM4.5 0.5v12M8.5 0.5v12M0.5 4.5h12M0.5 8.5h12" />
          </svg>
        </button>
        <button aria-label="页面布局视图" className="flex w-10 justify-center">
          <svg width="14" height="13" viewBox="0 0 14 13" fill="none" stroke="#333" aria-hidden="true">
            <path d="M0.5 0.5h13v12H0.5zM3.5 2.5h7v10h-7zM5 5.5h4M5 7.5h4M5 9.5h4" />
          </svg>
        </button>
        <button aria-label="分页预览" className="flex w-10 justify-center">
          <svg width="14" height="13" viewBox="0 0 14 13" fill="none" stroke="#333" aria-hidden="true">
            <path d="M0.5 12V0.5h13V9.5H0.5M5.5 0.5v6h4v-6" />
          </svg>
        </button>
        <button aria-label="缩小" className="ml-1.5 h-px w-2 bg-[#444]" />
        <input
          type="range"
          aria-label="缩放"
          defaultValue={50}
          className="mx-[5px] h-2.5 w-[100px] appearance-none bg-transparent [&::-webkit-slider-runnable-track]:h-px [&::-webkit-slider-runnable-track]:bg-[#666] [&::-webkit-slider-thumb]:-mt-[5px] [&::-webkit-slider-thumb]:h-2.5 [&::-webkit-slider-thumb]:w-[5px] [&::-webkit-slider-thumb]:appearance-none [&::-webkit-slider-thumb]:bg-[#555]"
        />
        <button aria-label="放大">
          <svg width="8" height="8" viewBox="0 0 8 8" className="block" aria-hidden="true"><path d="M4 0v8M0 4h8" stroke="#444" /></svg>
        </button>
        <span className="mr-2 ml-3.5">100%</span>
      </div>
    </div>
  );
}

function PointerArrow() {
  return (
    <svg width="72" height="92" viewBox="0 0 72 92" className="pointer-events-none absolute top-[250px] left-[198px] z-30" aria-hidden="true">
      <path d="M2 88 54 15.500 50 12 69.500 2.500 67.500 21.500 62.500 18.500 4 89.500z" fill="#f8393b" />
    </svg>
  );
}

function Watermark() {
  return (
    <svg width="260" height="128" viewBox="0 0 260 128" className="pointer-events-none absolute top-[520px] right-[64px] z-30" fill="#fff" stroke="#d6d6d6" strokeWidth="1.2" aria-hidden="true">
      <g fillOpacity="0.85">
        <ellipse cx="101" cy="35.5" rx="9.5" ry="12" />
        <ellipse cx="118" cy="18.5" rx="9" ry="12.5" />
        <ellipse cx="140" cy="20" rx="9.5" ry="12" />
        <ellipse cx="153" cy="41" rx="9.5" ry="11.5" />
        <path d="M127 37c8 0 12 6 16 12 5 7 14 11 15 21 0 10-8 13-16 13-6 0-9-2-15-2s-9 2-15 2c-9 0-15-5-15-14 0-9 10-13 15-20 4-6 7-12 15-12z" />
      </g>
      <text x="8" y="81" fontSize="53" fontWeight="700" fontFamily="Liberation Sans" fillOpacity="0.85" strokeWidth="1.5">Bai</text>
      <text x="106" y="76" fontSize="33" fontWeight="700" fontFamily="Liberation Sans">du</text>
      <text x="165" y="78" fontSize="41" fontWeight="900" fontFamily="Noto Sans CJK SC" fillOpacity="0.85">经验</text>
      <text x="11" y="112" fontSize="27" fontFamily="Noto Sans" strokeWidth="3" strokeOpacity="0.6" paintOrder="stroke">jingyan.baidu.com</text>
    </svg>
  );
}

/* ---------- page ---------- */

const TABS = ["文件", "开始", "插入", "页面布局", "公式", "数据", "审阅", "视图", "帮助", "PDF工具集"];

export default function App() {
  return (
    <div className="relative h-screen overflow-hidden bg-[#efefef] font-['Noto_Sans','Noto_Sans_CJK_SC',sans-serif] text-[#333]">
      <header className="flex h-[29px] items-start pr-3">
        <nav className="flex gap-[19px] pl-1.5 text-[13px] leading-[26px]">
          {TABS.map((t) => (
            <a
              key={t}
              href="#"
              className={`h-[26px] whitespace-nowrap first:mr-1 ${t === "插入" ? "border-b-2 border-[#107c41] font-bold text-[#222]" : ""}`}
            >
              {t}
            </a>
          ))}
        </nav>
        <div className="mt-0.5 ml-auto flex gap-2 text-[13px] font-bold">
          <button className="flex h-6 w-[60px] items-center justify-center gap-1 rounded border border-[#d1d1d1] bg-white">
            <svg width="12" height="12" viewBox="0 0 12 12" fill="none" stroke="#333" aria-hidden="true">
              <path d="M0.5 1.5h11v7h-6l-3 3v-3h-2z" />
            </svg>
            批注
          </button>
          <button className="flex h-6 w-[60px] items-center justify-center gap-1 rounded bg-[#107c41] text-white">
            <svg width="12" height="13" viewBox="0 0 12 13" fill="none" stroke="#fff" aria-hidden="true">
              <path d="M4 4.5H0.5v8h10V9M3 9c0-4 2-5.500 5-5.500v-2.500l3.500 4L8 9V6.500c-2 0-4 .5-5 2.500z" />
            </svg>
            共享
          </button>
        </div>
      </header>

      <Ribbon />

      <div className="my-[9px] mr-2 flex h-7 items-stretch">
        <div className="flex w-[98px] items-center rounded-r border border-l-0 border-[#d1d1d1] bg-white">
          <input aria-label="名称框" defaultValue="A1" className="w-0 min-w-0 flex-1 pl-[3px] text-[13px] outline-none" />
          <button aria-label="名称列表" className="mr-1">
            <WideChevron />
          </button>
        </div>
        <div className="flex w-5 flex-col items-center justify-center gap-[3px]">
          <i className="size-0.5 bg-[#888]" />
          <i className="size-0.5 bg-[#888]" />
          <i className="size-0.5 bg-[#888]" />
        </div>
        <div className="flex flex-1 items-center rounded border border-[#d1d1d1] bg-white">
          <button aria-label="取消" className="ml-1.5">
            <svg width="12" height="12" viewBox="0 0 12 12" aria-hidden="true"><path d="M0.5 0.5l11 11M11.5 0.5l-11 11" stroke="#b4b4b4" strokeWidth="1.2" /></svg>
          </button>
          <button aria-label="输入" className="ml-2.5">
            <svg width="16" height="12" viewBox="0 0 16 12" fill="none" aria-hidden="true"><path d="M0.5 6l5 5L15.5 1" stroke="#b4b4b4" strokeWidth="1.2" /></svg>
          </button>
          <input aria-label="编辑栏" className="ml-2 min-w-0 flex-1 text-[13px] outline-none" />
          <button aria-label="展开编辑栏" className="mr-[3px] mb-1">
            <WideChevron />
          </button>
        </div>
      </div>

      <Sheet />
      <SheetTabs />
      <StatusBar />
      <PointerArrow />
      <Watermark />
    </div>
  );
}
